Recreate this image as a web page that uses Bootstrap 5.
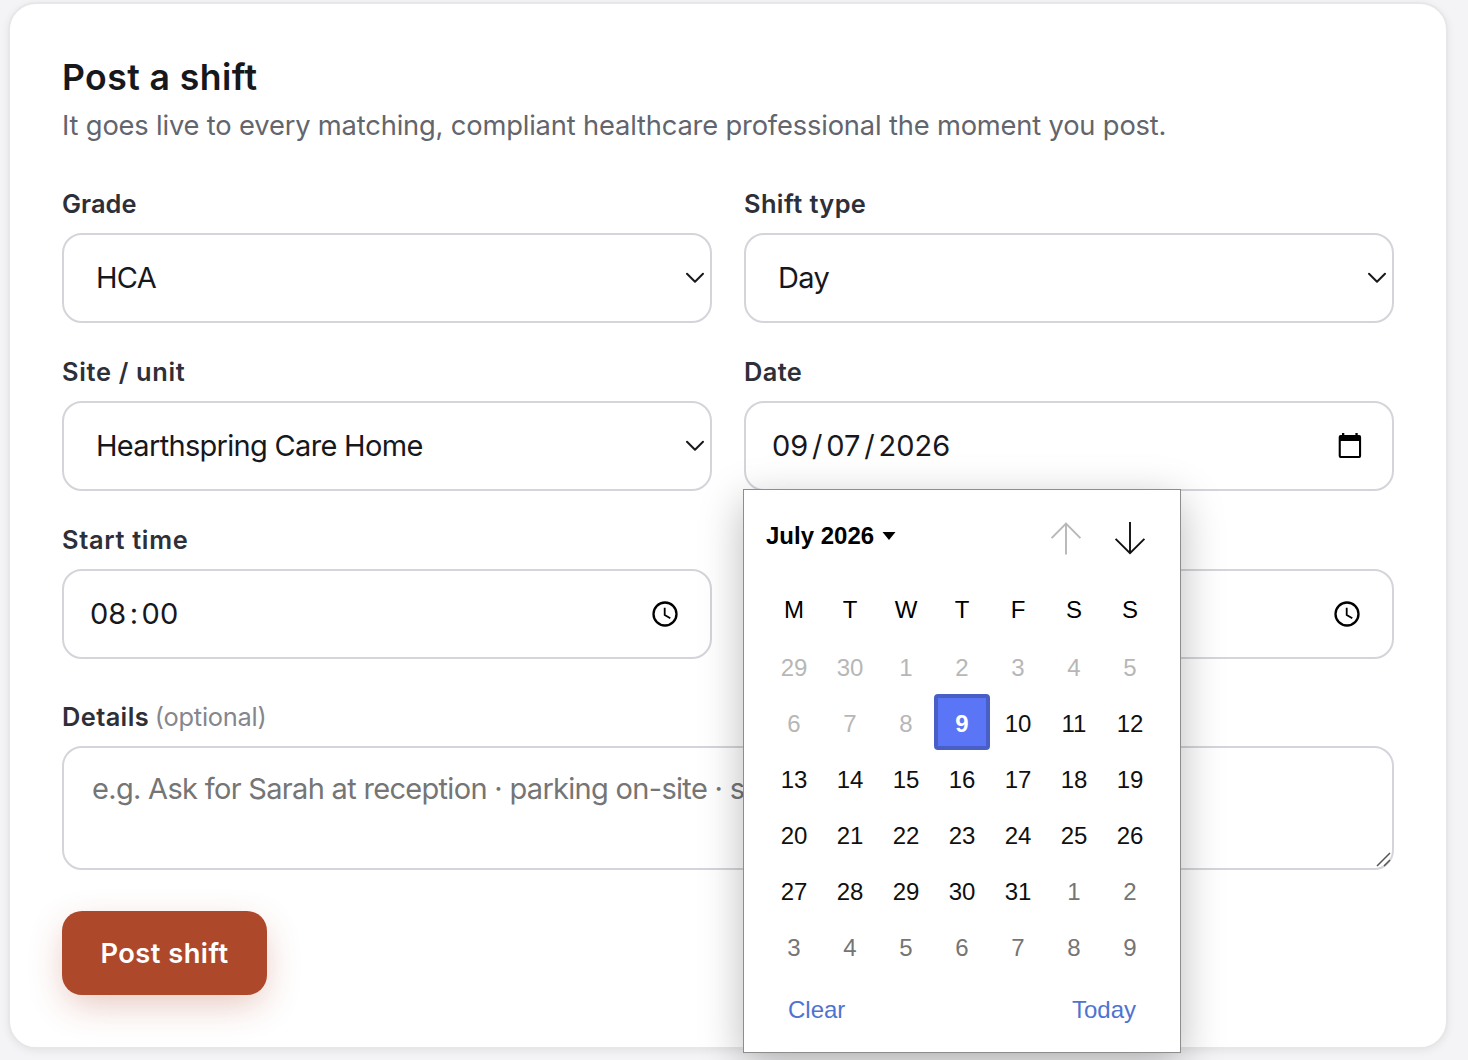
<!DOCTYPE html>
<html lang="en">
<head>
<meta charset="utf-8">
<meta name="viewport" content="width=device-width, initial-scale=1">
<title>Post a shift</title>
<link href="https://cdn.jsdelivr.net/npm/bootstrap@5.3.0/dist/css/bootstrap.min.css" rel="stylesheet">
<style>
body{background:#f4f4f6;font-family:Inter,"Liberation Sans",sans-serif;height:1060px;overflow:hidden;padding:2px 20px 0 8px}
.shift-card{height:1047px;border:2px solid #e7e7ea;border-radius:28px;padding:48px 52px 0;box-shadow:0 2px 8px rgba(20,20,40,.07)}
.shift-title{font-size:35.6px;font-weight:600;line-height:50px;letter-spacing:.42px;color:#17181c;padding-top:1px}
.shift-sub{font-size:27.3px;line-height:46px;letter-spacing:-.17px;color:#63656d;margin-bottom:36px}
.shift-row{--bs-gutter-x:32px;--bs-gutter-y:30px;margin-bottom:39px}
.field-label{display:block;font-size:25.4px;font-weight:600;line-height:38px;letter-spacing:.4px;color:#2e3039;margin-bottom:10px}
.label-snug{letter-spacing:.05px}
.label-wide{letter-spacing:.68px}
.field-note{font-weight:400;letter-spacing:-.25px;color:#85868e;margin-left:-1px}
.shift-card .form-control{height:90px;border:2px solid #d4d4da;border-radius:20px;font-size:29px;line-height:1;letter-spacing:-.69px;color:#17181c;background:#fff}
.shift-card .pick-field{padding:0 5px 1px 32px}
.shift-card .pick-field svg{margin-top:1px}
.shift-card .time-field{padding:0 30px 1px 26px;letter-spacing:0}
.shift-card .clock-field{padding-right:32px}
.shift-card .clock-field svg{margin-top:1px}
.shift-card .note-box{height:124px;line-height:40px;color:#757575;padding:21px 28px 0;white-space:nowrap}
.date-sep{margin:0 3.8px}
.time-sep{margin:0 3.5px}
.resize-grip{right:0;bottom:0}
.post-btn,.post-btn:hover{width:205px;height:84px;margin-top:41px;padding-top:8px;border-radius:20px;font-size:27.3px;font-weight:600;letter-spacing:.45px;background:#ae482a;color:#fff;border:0;box-shadow:0 12px 36px -4px rgba(174,72,42,.32)}
.picker{left:-1px;top:88px;z-index:5;width:438px;height:564px;background:#fff;border:1px solid #8d8d8d;font-family:"Liberation Sans",Arial,sans-serif;font-size:24px;line-height:28px;color:#101010;padding:0 22px;box-shadow:0 12px 40px rgba(0,0,0,.27)}
.picker-head{height:92px;color:#000}
.picker-arrows{gap:32px;margin-right:12px;padding-top:4px}
.picker-grid{display:grid;grid-template-columns:repeat(7,56px);grid-auto-rows:56px}
.picker-grid>span{display:flex;align-items:center;justify-content:center;padding-top:4px}
.picker-grid>.wday{color:#000;padding:0}
.past{color:#b7b7b7}
.next{color:#757575}
.picker-grid>.chosen{background:#5a75f6;border:4px solid #4a5fc6;border-radius:4px;color:#fff;font-weight:700}
.picker-foot{height:72px;padding:0 22px;color:#4f73d0}
</style>
<script src="https://cdn.jsdelivr.net/npm/bootstrap@5.3.0/dist/js/bootstrap.bundle.min.js"></script>
</head>
<body>
<svg class="d-none">
  <symbol id="chev" viewBox="0 0 20 12"><path d="M2 1.7 10 9.8 18 1.7" fill="none" stroke="#17181c" stroke-width="2" stroke-linecap="round" stroke-linejoin="round"/></symbol>
  <symbol id="clock" viewBox="0 0 26 26"><circle cx="13" cy="13" r="11.5" fill="none" stroke="#000" stroke-width="2.3"/><path d="M12.7 6.7V14L18.3 17.3" fill="none" stroke="#000" stroke-width="1.8"/></symbol>
</svg>
<main class="card shift-card">
  <h1 class="shift-title mb-0">Post a shift</h1>
  <p class="shift-sub">It goes live to every matching, compliant healthcare professional the moment you post.</p>

  <div class="row shift-row mt-0">
    <div class="col-6 mt-0">
      <label class="field-label label-snug">Grade</label>
      <div class="form-control pick-field d-flex align-items-center justify-content-between"><span>HCA</span><svg width="20" height="12"><use href="#chev"/></svg></div>
    </div>
    <div class="col-6 mt-0">
      <label class="field-label">Shift type</label>
      <div class="form-control pick-field d-flex align-items-center justify-content-between"><span>Day</span><svg width="20" height="12"><use href="#chev"/></svg></div>
    </div>
    <div class="col-6">
      <label class="field-label label-wide">Site / unit</label>
      <div class="form-control pick-field d-flex align-items-center justify-content-between"><span>Hearthspring Care Home</span><svg width="20" height="12"><use href="#chev"/></svg></div>
    </div>
    <div class="col-6">
      <label class="field-label">Date</label>
      <div class="position-relative">
        <div class="form-control time-field d-flex align-items-center justify-content-between">
          <span>09<span class="date-sep">/</span>07<span class="date-sep">/</span>2026</span>
          <svg width="24" height="26" viewBox="0 0 24 26"><path d="M4 0h2.3v3H4zM17.4 0h2.3v3h-2.3z"/><path fill-rule="evenodd" d="M2.6 2h18.6a1.9 1.9 0 0 1 1.9 1.9v19.2a1.9 1.9 0 0 1-1.9 1.9H2.6a1.9 1.9 0 0 1-1.9-1.9V3.9A1.9 1.9 0 0 1 2.6 2zM2.8 8v15H21V8z"/></svg>
        </div>
        <div class="picker position-absolute">
          <div class="picker-head d-flex align-items-center justify-content-between">
            <div class="d-flex align-items-center fw-bold">July 2026<svg class="ms-2" width="14" height="9" viewBox="0 0 14 9"><path d="M.5 0h13L7 8z"/></svg></div>
            <div class="picker-arrows d-flex">
              <svg width="32" height="34" viewBox="0 0 32 34" fill="none" stroke="#b7b7b7" stroke-width="1.9"><path d="M16 2v31.5M1.6 17.2 16 2.6l14.4 14.6"/></svg>
              <svg width="32" height="34" viewBox="0 0 32 34" fill="none" stroke="#101010" stroke-width="1.9"><path d="M16 1v31.5M1.6 17.8 16 32.2l14.4-14.4"/></svg>
            </div>
          </div>
          <div class="picker-grid">
            <span class="wday">M</span><span class="wday">T</span><span class="wday">W</span><span class="wday">T</span><span class="wday">F</span><span class="wday">S</span><span class="wday">S</span>
            <span class="past">29</span><span class="past">30</span><span class="past">1</span><span class="past">2</span><span class="past">3</span><span class="past">4</span><span class="past">5</span>
            <span class="past">6</span><span class="past">7</span><span class="past">8</span><span class="chosen">9</span><span>10</span><span>11</span><span>12</span>
            <span>13</span><span>14</span><span>15</span><span>16</span><span>17</span><span>18</span><span>19</span>
            <span>20</span><span>21</span><span>22</span><span>23</span><span>24</span><span>25</span><span>26</span>
            <span>27</span><span>28</span><span>29</span><span>30</span><span>31</span><span class="next">1</span><span class="next">2</span>
            <span class="next">3</span><span class="next">4</span><span class="next">5</span><span class="next">6</span><span class="next">7</span><span class="next">8</span><span class="next">9</span>
          </div>
          <div class="picker-foot d-flex align-items-center justify-content-between"><span>Clear</span><span>Today</span></div>
        </div>
      </div>
    </div>
    <div class="col-6">
      <label class="field-label label-wide">Start time</label>
      <div class="form-control time-field clock-field d-flex align-items-center justify-content-between"><span>08<span class="time-sep">:</span>00</span><svg width="26" height="26"><use href="#clock"/></svg></div>
    </div>
    <div class="col-6">
      <label class="field-label">&nbsp;</label>
      <div class="form-control time-field clock-field d-flex align-items-center justify-content-end"><svg width="26" height="26"><use href="#clock"/></svg></div>
    </div>
  </div>

  <label class="field-label">Details <span class="field-note">(optional)</span></label>
  <div class="form-control note-box position-relative">e.g. Ask for Sarah at reception · parking on-site · s
    <svg class="resize-grip position-absolute" width="18" height="18" viewBox="0 0 18 18" fill="none" stroke="#555" stroke-width="1.5"><path d="M3 16 16 3M10 16l6-6"/></svg>
  </div>
  <button type="button" class="btn post-btn">Post shift</button>
</main>
</body>
</html>
